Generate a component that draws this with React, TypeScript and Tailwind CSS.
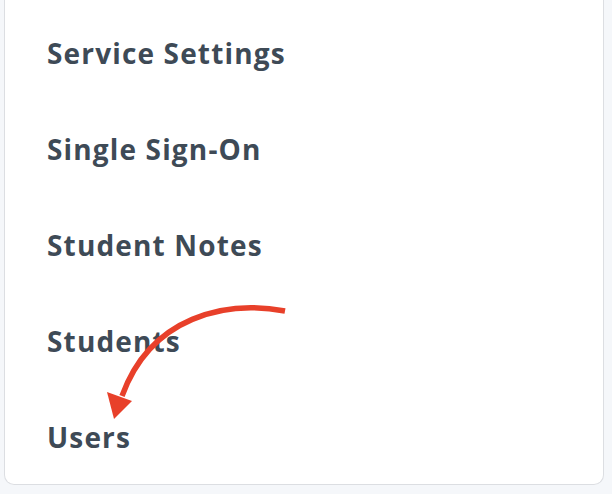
const items = ['Service Settings', 'Single Sign-On', 'Student Notes', 'Students', 'Users'];

export default function App() {
  return (
    <div className="w-[612px] h-[494px] bg-[#f5f7fa] overflow-hidden">
      <div className="relative ml-[4px] w-[600px] bg-white border border-t-0 border-[#dcdee2] rounded-b-[10px] pt-[4px]">
        <ul className="flex flex-col">
          {items.map(label => (
            <li
              key={label}
              className="h-[96px] flex items-center pl-[42px] pt-[2px] text-[28px] font-bold tracking-[1.15px] text-[#3e4a56] font-['Open_Sans','Noto_Sans',sans-serif]"
            >
              {label}
            </li>
          ))}
        </ul>
        {/* annotation arrow drawn over the list */}
        <svg
          className="absolute left-[-4px] top-0 pointer-events-none"
          width="612"
          height="494"
          viewBox="0 0 612 494"
        >
          <path
            d="M284 311 C 225 300, 150 316, 121 396"
            fill="none"
            stroke="#e8402a"
            strokeWidth="5.5"
          />
          <polygon points="106,392 131,401 113,419" fill="#e8402a" />
        </svg>
      </div>
    </div>
  );
}
